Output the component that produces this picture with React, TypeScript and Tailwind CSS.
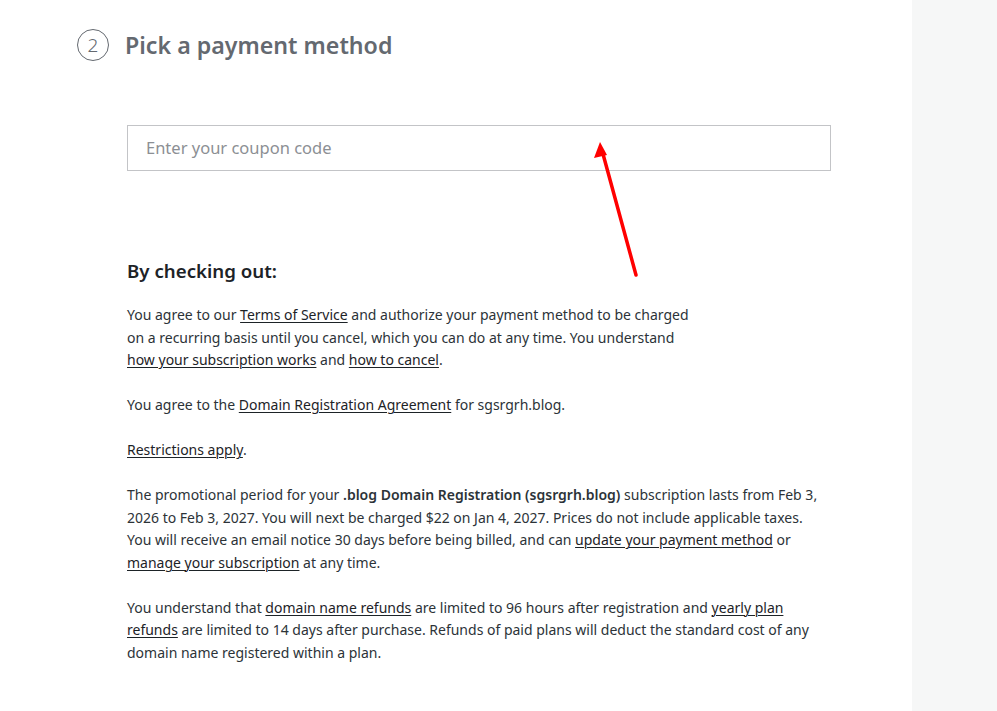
import React from "react";

const A = ({ children }: { children: React.ReactNode }) => (
  <a href="#" className="underline underline-offset-2 decoration-1 text-[#1d2327]">
    {children}
  </a>
);

export default function App() {
  return (
    <div
      className="flex min-h-[711px] w-full bg-white text-[#2c3338]"
      style={{ fontFamily: '"Noto Sans", "Open Sans", sans-serif' }}
    >
      <main className="relative flex-1 pl-[77px] pt-[29px]">
        <div className="flex items-center gap-4">
          <div className="flex h-8 w-8 items-center justify-center rounded-full border border-[#646970] text-[19px] font-light text-[#646970]">
            2
          </div>
          <h1 className="text-[23.2px] font-semibold text-[#646970] leading-8">
            Pick a payment method
          </h1>
        </div>

        <div className="ml-[50px] w-[704px]">
          <div className="mt-[64px] h-[46px] border border-[#c3c4c7] flex items-center px-[18px]">
            <input
              className="w-full outline-none text-[16.5px] text-[#2c3338] placeholder:text-[#8c8f94] bg-transparent"
              placeholder="Enter your coupon code"
            />
          </div>

          <h2 className="mt-[87px] text-[18.7px] font-semibold leading-[26px] text-[#1d2327]">
            By checking out:
          </h2>

          <div className="mt-[20px] text-[14px] leading-[22.5px] text-[#2c3338]">
            <p className="max-w-[572px]">
              You agree to our <A>Terms of Service</A> and authorize your payment method to be charged on a recurring basis until you cancel, which you can do at any time. You understand <A>how your subscription works</A> and <A>how to cancel</A>.
            </p>
            <p className="mt-[22.5px]">
              You agree to the <A>Domain Registration Agreement</A> for sgsrgrh.blog.
            </p>
            <p className="mt-[22.5px]">
              <A>Restrictions apply</A>.
            </p>
            <p className="mt-[22.5px]">
              The promotional period for your <strong className="font-semibold">.blog Domain Registration (sgsrgrh.blog)</strong> subscription lasts from Feb 3, 2026 to Feb 3, 2027. You will next be charged $22 on Jan 4, 2027. Prices do not include applicable taxes. You{"\u00a0"}will receive an email notice 30 days before being billed, and can <A>update your payment method</A> or <A>manage your subscription</A> at any time.
            </p>
            <p className="mt-[22.5px]">
              You understand that <A>domain name refunds</A> are limited to 96 hours after registration and <A>yearly plan refunds</A> are limited to 14 days after purchase. Refunds of paid plans will deduct the standard cost of any domain name registered within a plan.
            </p>
          </div>
        </div>

        <svg
          className="pointer-events-none absolute left-[590px] top-[138px]"
          width="60"
          height="145"
          viewBox="0 0 60 145"
        >
          <line x1="46" y1="137" x2="13" y2="16" stroke="#ff0000" strokeWidth="3.5" strokeLinecap="round" />
          <polygon points="10,4 4,20 17,17" fill="#ff0000" />
        </svg>
      </main>
      <aside className="w-[85px] shrink-0 bg-[#f6f7f7]" />
    </div>
  );
}
